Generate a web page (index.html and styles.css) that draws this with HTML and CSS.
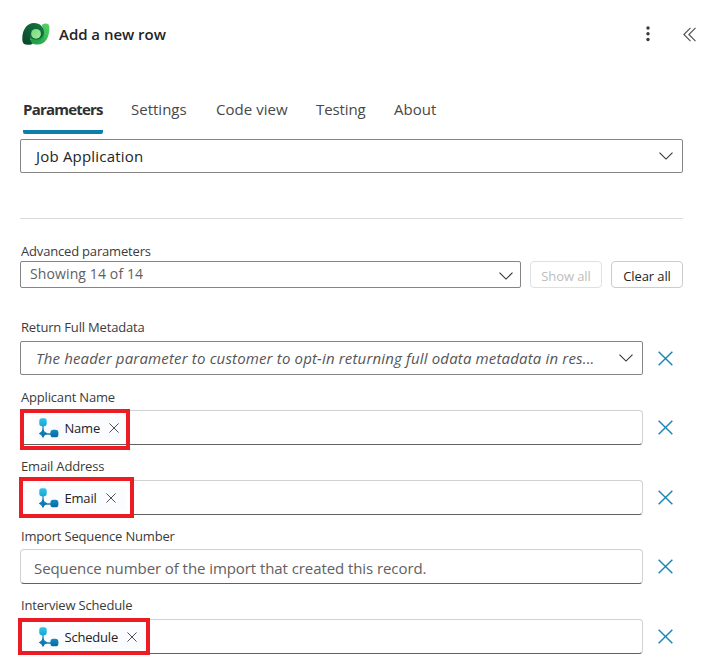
FILE: index.html
```html
<!DOCTYPE html>
<html lang="en">
<head>
<meta charset="utf-8">
<title>Add a new row</title>
<link rel="stylesheet" href="styles.css">
</head>
<body>
<svg class="defs" width="0" height="0" aria-hidden="true">
  <defs>
    <linearGradient id="aqua" x1="0" y1="0" x2="0" y2="1"><stop offset="0" stop-color="#2fc3ea"/><stop offset="1" stop-color="#1aa6d4"/></linearGradient>
    <linearGradient id="blue" x1="0" y1="0" x2="0" y2="1"><stop offset="0" stop-color="#138ac0"/><stop offset="1" stop-color="#0868a5"/></linearGradient>
    <symbol id="chevron" viewBox="0 0 14 8"><path d="M.5.7 7 7.1 13.5.7" fill="none" stroke="currentColor" stroke-width="1.1"/></symbol>
    <symbol id="cross" viewBox="0 0 16 16"><path d="M.7.7l14.6 14.6M15.3.7.7 15.3" fill="none" stroke="currentColor" stroke-width="1.5"/></symbol>
    <symbol id="flow" viewBox="0 0 20 20">
      <path d="M4 7v9h12" fill="none" stroke="#1683b7" stroke-width="1.3"/>
      <rect x=".3" y=".3" width="7.4" height="7.9" rx="2.6" fill="url(#aqua)"/>
      <path d="M4 11.600Q5 15 8 15.500 5 16.200 4 19.400 3 16.200 .3 15.500 3 15 4 11.600Z" fill="url(#blue)" stroke="#0e7ab1" stroke-width="1"/>
      <rect x="11.400" y="11.800" width="8" height="7.500" rx="2.900" fill="url(#blue)"/>
    </symbol>
  </defs>
</svg>
<main class="panel">
  <header class="header">
    <svg class="logo" viewBox="0 0 28 22">
      <defs>
        <linearGradient id="lg1" x1="0" y1="1" x2="1" y2="0"><stop offset="0" stop-color="#08442c"/><stop offset="1" stop-color="#137c40"/></linearGradient>
        <linearGradient id="lg2" x1="1" y1="0" x2="0" y2="1"><stop offset="0" stop-color="#59d766"/><stop offset="1" stop-color="#159447"/></linearGradient>
        <linearGradient id="lg3" x1="0" y1="0" x2="1" y2="1"><stop offset="0" stop-color="#79d97e"/><stop offset="1" stop-color="#a0ef9b"/></linearGradient>
      </defs>
      <path d="M20 2C22 .2 27.400-.6 27.400 4.500 27.400 14.500 23.500 21.500 15.500 21.500c-4 0-7.500-1.500-8.500-4.500l7-1c5 0 8-5 6-14z" fill="url(#lg2)"/>
      <path d="M12 0c6 0 10 4 10 10 0 4.500-3.500 7.500-8 7.500-2.500 0-4.500-.8-5.500-2 0 2.500.8 4 2.300 5.200-1.500 1-3.300 1-5.300 1C1 21.700.3 19 .3 15.500.3 6.500 5 0 12 0z" fill="url(#lg1)"/>
      <path d="M8 12c1 3 3 4.500 6 4.500 4 0 7-2.500 7.800-6.500.7 5-3 9-7.800 9-3.500 0-6-2.500-6-7z" fill="#249f4b"/>
      <circle cx="14" cy="10.800" r="4.900" fill="url(#lg3)"/>
    </svg>
    <h1 class="title">Add a new row</h1>
    <svg class="more" viewBox="0 0 4 16"><g fill="#3a3a3a"><circle cx="2" cy="2" r="1.700"/><circle cx="2" cy="7.700" r="1.700"/><circle cx="2" cy="13.500" r="1.700"/></g></svg>
    <svg class="collapse" viewBox="0 0 14 15"><path d="M7.500.8.9 7.500l6.600 6.700M12.500.8 5.900 7.500l6.600 6.700" fill="none" stroke="#555" stroke-width="1.200"/></svg>
  </header>
  <nav class="tabs">
    <a class="tab active">Parameters</a>
    <a class="tab settings">Settings</a>
    <a class="tab code">Code view</a>
    <a class="tab testing">Testing</a>
    <a class="tab about">About</a>
  </nav>
  <div class="select table-select"><span class="job">Job Application</span><svg class="chev"><use href="#chevron"/></svg></div>
  <hr class="rule">
  <section class="advanced">
    <div class="label">Advanced parameters</div>
    <div class="adv-row">
      <div class="select small"><span class="showing">Showing 14 of 14</span><svg class="chev"><use href="#chevron"/></svg></div>
      <button class="btn disabled">Show all</button>
      <button class="btn">Clear all</button>
    </div>
  </section>
  <section class="field metadata">
    <div class="label">Return Full Metadata</div>
    <div class="row">
      <div class="select"><span class="hint">The header parameter to customer to opt-in returning full odata metadata in res...</span><svg class="chev"><use href="#chevron"/></svg></div>
      <svg class="remove"><use href="#cross"/></svg>
    </div>
  </section>
  <section class="field applicant">
    <div class="label">Applicant Name</div>
    <div class="row">
      <div class="input"><span class="token"><svg class="flow"><use href="#flow"/></svg><span>Name</span><svg class="x"><use href="#cross"/></svg></span><i class="mark mark-name"></i></div>
      <svg class="remove"><use href="#cross"/></svg>
    </div>
  </section>
  <section class="field email">
    <div class="label">Email Address</div>
    <div class="row">
      <div class="input"><span class="token"><svg class="flow"><use href="#flow"/></svg><span>Email</span><svg class="x"><use href="#cross"/></svg></span><i class="mark mark-email"></i></div>
      <svg class="remove"><use href="#cross"/></svg>
    </div>
  </section>
  <section class="field import">
    <div class="label">Import Sequence Number</div>
    <div class="row">
      <div class="input"><span class="placeholder">Sequence number of the import that created this record.</span></div>
      <svg class="remove"><use href="#cross"/></svg>
    </div>
  </section>
  <section class="field interview">
    <div class="label">Interview Schedule</div>
    <div class="row">
      <div class="input"><span class="token"><svg class="flow"><use href="#flow"/></svg><span>Schedule</span><svg class="x"><use href="#cross"/></svg></span><i class="mark mark-schedule"></i></div>
      <svg class="remove"><use href="#cross"/></svg>
    </div>
  </section>
</main>
</body>
</html>
```
FILE: styles.css
```css
* { box-sizing: border-box; }
body { margin: 0; background: #fff; color: #242424; font-family: "Open Sans", "Noto Sans", sans-serif; font-size: 15px; overflow: hidden; }
svg { display: block; flex: none; }
.defs { position: absolute; }
.panel { width: 708px; height: 660px; padding: 0 25px 0 20px; }
.header { display: flex; align-items: center; height: 68px; margin-right: -14px; }
.logo { width: 28px; height: 22px; margin-left: 2px; }
.title { margin: 0 auto 0 9px; font-size: 15px; line-height: 22px; font-weight: 600; letter-spacing: -.03px; white-space: nowrap; padding-bottom: 1px; }
.more { width: 4px; height: 16px; margin-right: 33px; }
.collapse { width: 14px; height: 15px; }
.tabs { display: flex; gap: 28px; height: 66px; padding: 30px 0 0 3px; line-height: 22px; color: #484848; white-space: nowrap; }
.tab { height: 36px; }
.tab.active { border-bottom: 4px solid #0d7fab; border-radius: 0 0 2px 2px; width: 80px; font-weight: 700; color: #303030; letter-spacing: -.78px; }
.settings { width: 57px; }
.code { width: 72px; letter-spacing: .05px; }
.testing { width: 50px; letter-spacing: -.1px; }
.select { display: flex; align-items: center; justify-content: space-between; height: 34px; padding: 0 9px 0 15px; border: 1px solid #858585; border-radius: 2px; white-space: nowrap; }
.table-select { margin-top: 5px; }
.job { letter-spacing: .2px; }
.chev { width: 14px; height: 8px; color: #333; }
.rule { height: 1px; margin: 45px 0 0; border: 0; background: #dcdcdc; }
.advanced { padding-top: 22px; }
.label { height: 20px; padding-left: 1px; font-size: 13px; line-height: 20px; letter-spacing: -.18px; color: #3b3b3b; white-space: nowrap; }
.adv-row { display: flex; gap: 9px; }
.small { width: 501px; height: 27px; padding: 0 7px 0 9px; color: #616161; font-size: 14px; }
.showing { padding-bottom: 2px; letter-spacing: .12px; }
.small .chev { margin-top: 2px; }
.btn { width: 72px; height: 27px; padding: 2px 0 0; border: 1px solid #ccc; border-radius: 4px; background: #fff; color: #242424; font: 13px/20px "Open Sans", sans-serif; letter-spacing: -.1px; white-space: nowrap; }
.btn.disabled { border-color: #e0e0e0; color: #bdbdbd; }
.row { display: flex; align-items: center; }
.metadata { padding-top: 29px; }
.metadata .label { height: 24px; }
.metadata .remove { margin-top: 1px; }
.row .select, .input { width: 623px; }
.hint { font-style: italic; color: #555; letter-spacing: .165px; }
.remove { width: 15px; height: 15px; margin-left: 15px; color: #1784b3; }
.input { position: relative; display: flex; align-items: center; height: 35px; border: 1px solid #d1d1d1; border-bottom-color: #616161; border-radius: 4px; padding-left: 13px; }
.applicant { padding-top: 12px; }
.applicant .label, .import .label { height: 23px; }
.email { padding-top: 11px; }
.email .label { height: 24px; }
.import { padding-top: 11px; }
.interview { padding-top: 11px; }
.interview .label { height: 24px; }
.token { display: flex; align-items: center; height: 24px; margin-left: 4px; padding-right: 10px; background: #fbfcff; font-size: 13px; letter-spacing: -.2px; color: #222; }
.flow { width: 20px; height: 20px; margin: 0 5.5px 0 1px; }
.x { width: 10px; height: 10px; margin-left: 9px; color: #444; }
.placeholder { color: #616161; padding-top: 3px; letter-spacing: -.075px; }
.mark { position: absolute; border: 4px solid #ed1c24; }
.mark-name { left: -1px; top: -2px; width: 110px; height: 41px; }
.mark-email { left: -2px; top: -4px; width: 115px; height: 41px; }
.mark-schedule { left: -3px; top: -2px; width: 132px; height: 37px; }
```
